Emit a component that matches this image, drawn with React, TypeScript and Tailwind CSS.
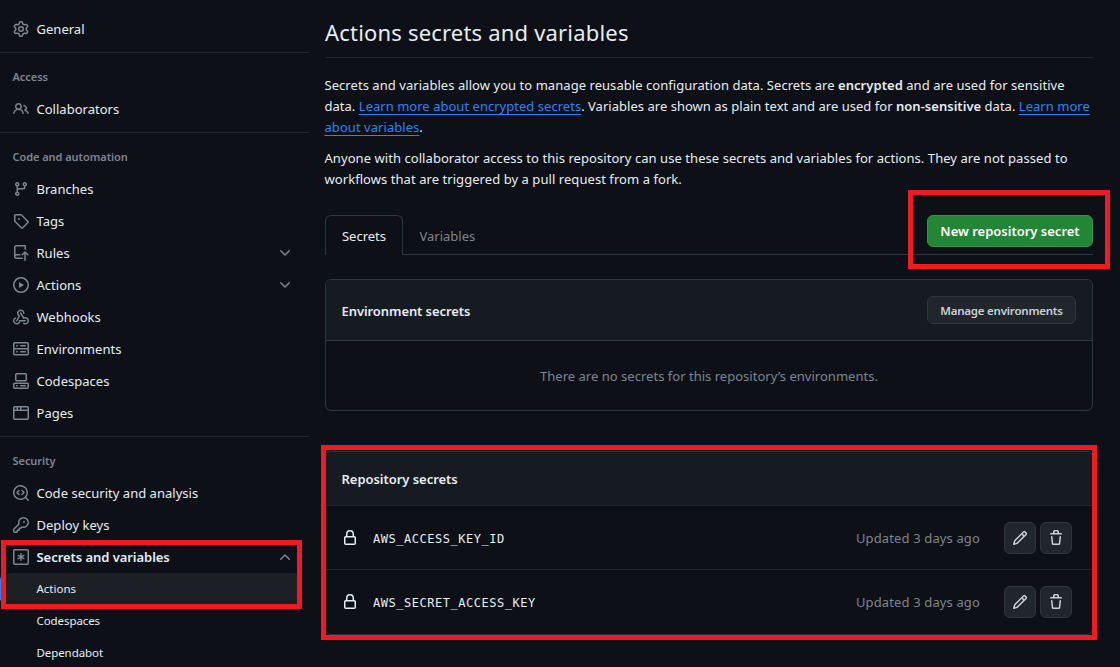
import React from "react";

const PATHS = {
  gear: "M8 0a8.2 8.2 0 0 1 .701.031C9.444.095 9.99.645 10.16 1.29l.288 1.107c.018.066.079.158.212.224.231.114.454.243.668.386.123.082.233.09.299.071l1.103-.303c.644-.176 1.392.021 1.82.63.27.385.506.792.704 1.218.315.675.111 1.422-.364 1.891l-.814.806c-.049.048-.098.147-.088.294.016.257.016.515 0 .772-.01.147.038.246.088.294l.814.806c.475.469.679 1.216.364 1.891a7.977 7.977 0 0 1-.704 1.217c-.428.61-1.176.807-1.82.63l-1.102-.302c-.067-.019-.177-.011-.3.071a5.909 5.909 0 0 1-.668.386c-.133.066-.194.158-.211.224l-.29 1.106c-.168.646-.715 1.196-1.458 1.26a8.006 8.006 0 0 1-1.402 0c-.743-.064-1.289-.614-1.458-1.26l-.289-1.106c-.018-.066-.079-.158-.212-.224a5.738 5.738 0 0 1-.668-.386c-.123-.082-.233-.09-.299-.071l-1.103.303c-.644.176-1.392-.021-1.82-.63a8.12 8.12 0 0 1-.704-1.218c-.315-.675-.111-1.422.363-1.891l.815-.806c.05-.048.098-.147.088-.294a6.214 6.214 0 0 1 0-.772c.01-.147-.038-.246-.088-.294l-.815-.806C.635 6.045.431 5.298.746 4.623a7.92 7.92 0 0 1 .704-1.217c.428-.61 1.176-.807 1.82-.63l1.102.302c.067.019.177.011.3-.071.214-.143.437-.272.668-.386.133-.066.194-.158.211-.224l.29-1.106C6.009.645 6.556.095 7.299.03 7.53.01 7.764 0 8 0Zm-.571 1.525c-.036.003-.108.036-.137.146l-.289 1.105c-.147.561-.549.967-.998 1.189-.173.086-.34.183-.5.29-.417.278-.97.423-1.529.27l-1.103-.303c-.109-.03-.175.016-.195.045-.22.312-.412.644-.573.99-.014.031-.021.11.059.19l.815.806c.411.406.562.957.53 1.456a4.709 4.709 0 0 0 0 .582c.032.499-.119 1.05-.53 1.456l-.815.806c-.081.08-.073.159-.059.19.162.346.353.677.573.989.02.03.085.076.195.046l1.102-.303c.56-.153 1.113-.008 1.53.27.161.107.328.204.501.29.447.222.85.629.997 1.189l.289 1.105c.029.109.101.143.137.146a6.6 6.6 0 0 0 1.142 0c.036-.003.108-.036.137-.146l.289-1.105c.147-.561.549-.967.998-1.189.173-.086.34-.183.5-.29.417-.278.97-.423 1.529-.27l1.103.303c.109.029.175-.016.195-.045.22-.313.411-.644.573-.99.014-.031.021-.11-.059-.19l-.815-.806c-.411-.406-.562-.957-.53-1.456a4.709 4.709 0 0 0 0-.582c-.032-.499.119-1.05.53-1.456l.815-.806c.081-.08.073-.159.059-.19a6.464 6.464 0 0 0-.573-.989c-.02-.03-.085-.076-.195-.046l-1.102.303c-.56.153-1.113.008-1.53-.27a4.44 4.44 0 0 0-.501-.29c-.447-.222-.85-.629-.997-1.189l-.289-1.105c-.029-.11-.101-.143-.137-.146a6.6 6.6 0 0 0-1.142 0ZM11 8a3 3 0 1 1-6 0 3 3 0 0 1 6 0ZM9.5 8a1.5 1.5 0 1 0-3.001.001A1.5 1.5 0 0 0 9.5 8Z",
  people: "M2 5.5a3.5 3.5 0 1 1 5.898 2.549 5.508 5.508 0 0 1 3.034 4.084.75.75 0 1 1-1.482.235 4 4 0 0 0-7.9 0 .75.75 0 0 1-1.482-.236A5.507 5.507 0 0 1 3.102 8.05 3.493 3.493 0 0 1 2 5.5ZM11 4a3.001 3.001 0 0 1 2.22 5.018 5.01 5.01 0 0 1 2.56 3.012.749.749 0 0 1-.885.954.752.752 0 0 1-.549-.514 3.507 3.507 0 0 0-2.522-2.372.75.75 0 0 1-.574-.73v-.352a.75.75 0 0 1 .416-.672A1.5 1.5 0 0 0 11 5.5.75.75 0 0 1 11 4Zm-5.5-.5a2 2 0 1 0-.001 3.999A2 2 0 0 0 5.5 3.5Z",
  branch: "M9.5 3.25a2.25 2.25 0 1 1 3 2.122V6A2.5 2.5 0 0 1 10 8.5H6a1 1 0 0 0-1 1v1.128a2.251 2.251 0 1 1-1.5 0V5.372a2.25 2.25 0 1 1 1.5 0v1.836A2.493 2.493 0 0 1 6 7h4a1 1 0 0 0 1-1v-.628A2.25 2.25 0 0 1 9.5 3.25Zm-6 0a.75.75 0 1 0 1.5 0 .75.75 0 0 0-1.5 0Zm8.25-.75a.75.75 0 1 0 0 1.5.75.75 0 0 0 0-1.5ZM4.25 12a.75.75 0 1 0 0 1.5.75.75 0 0 0 0-1.5Z",
  tag: "M1 7.775V2.75C1 1.784 1.784 1 2.75 1h5.025c.464 0 .91.184 1.238.513l6.25 6.25a1.75 1.75 0 0 1 0 2.474l-5.026 5.026a1.75 1.75 0 0 1-2.474 0l-6.25-6.25A1.752 1.752 0 0 1 1 7.775Zm1.5 0c0 .066.026.13.073.177l6.25 6.25a.25.25 0 0 0 .354 0l5.025-5.025a.25.25 0 0 0 0-.354l-6.25-6.25a.25.25 0 0 0-.177-.073H2.75a.25.25 0 0 0-.25.25ZM6 5a1 1 0 1 1 0 2 1 1 0 0 1 0-2Z",
  repoPush: "M1 2.5A2.5 2.5 0 0 1 3.5 0h8.75a.75.75 0 0 1 .75.75v3.5a.75.75 0 0 1-1.5 0V1.5h-8a1 1 0 0 0-1 1v6.708A2.493 2.493 0 0 1 3.5 9h3.25a.75.75 0 0 1 0 1.5H3.5a1 1 0 0 0 0 2h5.75a.75.75 0 0 1 0 1.5H3.5A2.5 2.5 0 0 1 1 11.5Zm13.23 7.79-1.48-1.48v6.44a.75.75 0 0 1-1.5 0V8.81l-1.48 1.48a.749.749 0 0 1-1.275-.326.749.749 0 0 1 .215-.734l2.76-2.76a.75.75 0 0 1 1.06 0l2.76 2.76a.749.749 0 0 1-.326 1.275.749.749 0 0 1-.734-.215Z",
  play: "M8 0a8 8 0 1 1 0 16A8 8 0 0 1 8 0ZM1.5 8a6.5 6.5 0 1 0 13 0 6.5 6.5 0 0 0-13 0Zm4.879-2.773 4.264 2.559a.25.25 0 0 1 0 .428l-4.264 2.559A.25.25 0 0 1 6 10.559V5.442a.25.25 0 0 1 .379-.215Z",
  webhook: "M5.5 4.25a2.25 2.25 0 0 1 4.5 0 .75.75 0 0 0 1.5 0 3.75 3.75 0 1 0-6.14 2.889l-2.272 4.258a.75.75 0 0 0 1.324.706L7 7.25a.75.75 0 0 0-.309-1.015A2.25 2.25 0 0 1 5.5 4.25Z M7.364 3.607a.75.75 0 0 1 1.03.257l2.608 4.349a3.75 3.75 0 1 1-.628 6.785.75.75 0 0 1 .752-1.299 2.25 2.25 0 1 0-.033-3.88.75.75 0 0 1-1.03-.256L7.107 4.636a.75.75 0 0 1 .257-1.03Z M2.9 8.776A.75.75 0 0 1 2.625 9.8 2.25 2.25 0 1 0 6 11.75a.75.75 0 0 1 .75-.751h5.5a.75.75 0 0 1 0 1.5H7.425a3.751 3.751 0 1 1-5.55-3.998.75.75 0 0 1 1.024.274Z",
  server: "M1.75 1h12.5c.966 0 1.75.784 1.75 1.75v4c0 .372-.116.717-.314 1 .198.283.314.628.314 1v4a1.75 1.75 0 0 1-1.75 1.75H1.75A1.75 1.75 0 0 1 0 12.75v-4c0-.358.109-.707.314-1a1.739 1.739 0 0 1-.314-1v-4C0 1.784.784 1 1.75 1ZM1.5 2.75v4c0 .138.112.25.25.25h12.5a.25.25 0 0 0 .25-.25v-4a.25.25 0 0 0-.25-.25H1.75a.25.25 0 0 0-.25.25Zm.25 5.75a.25.25 0 0 0-.25.25v4c0 .138.112.25.25.25h12.5a.25.25 0 0 0 .25-.25v-4a.25.25 0 0 0-.25-.25ZM7 4.75A.75.75 0 0 1 7.75 4h4.5a.75.75 0 0 1 0 1.5h-4.5A.75.75 0 0 1 7 4.75ZM7.75 10h4.5a.75.75 0 0 1 0 1.5h-4.5a.75.75 0 0 1 0-1.5ZM3 4.75A.75.75 0 0 1 3.75 4h.5a.75.75 0 0 1 0 1.5h-.5A.75.75 0 0 1 3 4.75ZM3.75 10h.5a.75.75 0 0 1 0 1.5h-.5a.75.75 0 0 1 0-1.5Z",
  codespaces: "M0 11.25c0-.966.784-1.75 1.75-1.75h12.5c.966 0 1.75.784 1.75 1.75v3A1.75 1.75 0 0 1 14.25 16H1.75A1.75 1.75 0 0 1 0 14.25Zm2-9.5C2 .784 2.784 0 3.75 0h8.5C13.216 0 14 .784 14 1.75v5a1.75 1.75 0 0 1-1.75 1.75h-8.5A1.75 1.75 0 0 1 2 6.75Zm1.75-.25a.25.25 0 0 0-.25.25v5c0 .138.112.25.25.25h8.5a.25.25 0 0 0 .25-.25v-5a.25.25 0 0 0-.25-.25Zm-2 9.5a.25.25 0 0 0-.25.25v3c0 .138.112.25.25.25h12.5a.25.25 0 0 0 .25-.25v-3a.25.25 0 0 0-.25-.25Z M7 12.75a.75.75 0 0 1 .75-.75h4.5a.75.75 0 0 1 0 1.5h-4.5a.75.75 0 0 1-.75-.75Zm-4 0a.75.75 0 0 1 .75-.75h.5a.75.75 0 0 1 0 1.5h-.5a.75.75 0 0 1-.75-.75Z",
  browser: "M0 2.75C0 1.784.784 1 1.75 1h12.5c.966 0 1.75.784 1.75 1.75v10.5A1.75 1.75 0 0 1 14.25 15H1.75A1.75 1.75 0 0 1 0 13.25ZM14.5 6h-13v7.25c0 .138.112.25.25.25h12.5a.25.25 0 0 0 .25-.25Zm-6-3.5v2h6V2.75a.25.25 0 0 0-.25-.25ZM5 2.5v2h2v-2Zm-3.25 0a.25.25 0 0 0-.25.25V4.5h2v-2Z",
  codescan: "M8.47 4.97a.75.75 0 0 0 0 1.06L9.94 7.5 8.47 8.97a.75.75 0 1 0 1.06 1.06l2-2a.75.75 0 0 0 0-1.06l-2-2a.75.75 0 0 0-1.06 0ZM6.53 6.03a.75.75 0 0 0-1.06-1.06l-2 2a.75.75 0 0 0 0 1.06l2 2a.75.75 0 1 0 1.06-1.06L5.06 7.5l1.47-1.47Z M12.246 13.307a7.501 7.501 0 1 1 1.06-1.06l2.474 2.473a.749.749 0 0 1-.326 1.275.749.749 0 0 1-.734-.215ZM1.5 7.5a6.002 6.002 0 0 0 3.608 5.504 6.002 6.002 0 0 0 6.486-1.117.748.748 0 0 1 .292-.293A6 6 0 1 0 1.5 7.5Z",
  key: "M10.5 0a5.499 5.499 0 1 1-1.288 10.848l-.932.932a.749.749 0 0 1-.53.22H7v.75a.749.749 0 0 1-.22.53l-.5.5a.749.749 0 0 1-.53.22H5v.75a.749.749 0 0 1-.22.53l-.5.5a.749.749 0 0 1-.53.22h-2A1.75 1.75 0 0 1 0 14.25v-2c0-.199.079-.389.22-.53l4.932-4.932A5.5 5.5 0 0 1 10.5 0Zm-4 5.5c-.001.431.069.86.205 1.269a.75.75 0 0 1-.181.768L1.5 12.56v1.69c0 .138.112.25.25.25h1.69l.06-.06v-1.19a.75.75 0 0 1 .75-.75h1.19l.06-.06v-1.19a.75.75 0 0 1 .75-.75h1.19l1.023-1.025a.75.75 0 0 1 .768-.18A4 4 0 1 0 6.5 5.5ZM11 6a1 1 0 1 1 0-2 1 1 0 0 1 0 2Z",
  asterisk: "M1.75 0h12.5C15.216 0 16 .784 16 1.75v12.5A1.75 1.75 0 0 1 14.25 16H1.75A1.75 1.75 0 0 1 0 14.25V1.75C0 .784.784 0 1.75 0ZM1.5 1.75v12.5c0 .138.112.25.25.25h12.5a.25.25 0 0 0 .25-.25V1.75a.25.25 0 0 0-.25-.25H1.75a.25.25 0 0 0-.25.25Z M8 4a.75.75 0 0 1 .75.75V6.7l1.69-.975a.75.75 0 0 1 .75 1.3L9.5 8l1.69.976a.75.75 0 0 1-.75 1.298L8.75 9.3v1.951a.75.75 0 0 1-1.5 0V9.299l-1.69.976a.75.75 0 0 1-.75-1.3L6.5 8l-1.69-.975a.75.75 0 0 1 .75-1.3l1.69.976V4.75A.75.75 0 0 1 8 4Z",
  down: "M12.78 5.22a.749.749 0 0 1 0 1.06l-4.25 4.25a.749.749 0 0 1-1.06 0L3.22 6.28a.749.749 0 1 1 1.06-1.06L8 8.939l3.72-3.719a.749.749 0 0 1 1.06 0Z",
  lock: "M4 4a4 4 0 0 1 8 0v2h.25c.966 0 1.75.784 1.75 1.75v5.5A1.75 1.75 0 0 1 12.25 15h-8.5A1.75 1.75 0 0 1 2 13.25v-5.5C2 6.784 2.784 6 3.75 6H4Zm8.25 3.5h-8.5a.25.25 0 0 0-.25.25v5.5c0 .138.112.25.25.25h8.5a.25.25 0 0 0 .25-.25v-5.5a.25.25 0 0 0-.25-.25ZM10.5 6V4a2.5 2.5 0 1 0-5 0v2Z",
  pencil: "M11.013 1.427a1.75 1.75 0 0 1 2.474 0l1.086 1.086a1.75 1.75 0 0 1 0 2.474l-8.61 8.61c-.21.21-.47.364-.756.445l-3.251.93a.75.75 0 0 1-.927-.928l.929-3.25c.081-.286.235-.547.445-.758l8.61-8.61Zm.176 4.823L9.75 4.81l-6.286 6.287a.253.253 0 0 0-.064.108l-.558 1.953 1.953-.558a.253.253 0 0 0 .108-.064Zm1.238-3.763a.25.25 0 0 0-.354 0L10.811 3.75l1.439 1.44 1.263-1.263a.25.25 0 0 0 0-.354Z",
  trash: "M11 1.75V3h2.25a.75.75 0 0 1 0 1.5H2.75a.75.75 0 0 1 0-1.5H5V1.75C5 .784 5.784 0 6.75 0h2.5C10.216 0 11 .784 11 1.75ZM4.496 6.675l.66 6.6a.25.25 0 0 0 .249.225h5.19a.25.25 0 0 0 .249-.225l.66-6.6a.75.75 0 0 1 1.492.149l-.66 6.6A1.748 1.748 0 0 1 10.595 15h-5.19a1.75 1.75 0 0 1-1.741-1.575l-.66-6.6a.75.75 0 1 1 1.492-.15ZM6.5 1.75V3h3V1.75a.25.25 0 0 0-.25-.25h-2.5a.25.25 0 0 0-.25.25Z",
};

type IconName = keyof typeof PATHS;

function Icon({ name, className = "" }: { name: IconName; className?: string }) {
  return (
    <svg viewBox="0 0 16 16" fill="currentColor" className={`size-4 shrink-0 ${className}`} aria-hidden="true">
      <path d={PATHS[name]} />
    </svg>
  );
}

function NavItem({ icon, label, chevron }: { icon: IconName; label: string; chevron?: boolean }) {
  return (
    <li className="flex h-8 items-center gap-[7.5px] pr-4 pl-[13px]">
      <Icon name={icon} className="text-[#7d8590]" />
      <span className="flex-1 pt-0.5 tracking-[0.02px]">{label}</span>
      {chevron && <Icon name="down" className="text-[#7d8590]" />}
    </li>
  );
}

function NavGroup({ title, children }: { title: string; children: React.ReactNode }) {
  return (
    <section className="mt-[7px] border-t border-[#21262d] pt-2">
      <h3 className="flex h-8 items-center pl-[12.5px] text-[11px] font-semibold tracking-[-0.05px] text-[#7d8590]">{title}</h3>
      <ul>{children}</ul>
    </section>
  );
}

function SecretRow({ name }: { name: string }) {
  return (
    <li className="flex h-16 items-center border-t border-[#21262d] pr-5 pl-4">
      <Icon name="lock" className="text-[#e6edf3]" />
      <span className="ml-[15px] flex-1 pt-0.5 font-['DejaVu_Sans_Mono',monospace] text-[12px] tracking-[0.53px]">{name}</span>
      <span className="mr-6 pt-[3px] tracking-[0.13px] text-[#7d8590]">Updated 3 days ago</span>
      <div className="flex gap-1">
        <button className="flex size-8 items-center justify-center rounded-md border border-[#30363d] bg-[#21262d] text-[#c9d1d9]">
          <Icon name="pencil" />
        </button>
        <button className="flex size-8 items-center justify-center rounded-md border border-[#30363d] bg-[#21262d] text-[#c9d1d9]">
          <Icon name="trash" />
        </button>
      </div>
    </li>
  );
}

function Link({ children }: { children: React.ReactNode }) {
  return (
    <a className="text-[#2f81f7] underline decoration-1 underline-offset-[3px] [text-decoration-skip-ink:none]">{children}</a>
  );
}

export default function App() {
  return (
    <div className="relative flex h-[667px] w-[1120px] overflow-hidden bg-[#0d1117] font-['Noto_Sans',sans-serif] text-[13px] text-[#e6edf3]">
      <nav className="w-[309px] shrink-0 pt-[13px]">
        <ul>
          <NavItem icon="gear" label="General" />
        </ul>
        <NavGroup title="Access">
          <NavItem icon="people" label="Collaborators" />
        </NavGroup>
        <NavGroup title="Code and automation">
          <NavItem icon="branch" label="Branches" />
          <NavItem icon="tag" label="Tags" />
          <NavItem icon="repoPush" label="Rules" chevron />
          <NavItem icon="play" label="Actions" chevron />
          <NavItem icon="webhook" label="Webhooks" />
          <NavItem icon="server" label="Environments" />
          <NavItem icon="codespaces" label="Codespaces" />
          <NavItem icon="browser" label="Pages" />
        </NavGroup>
        <NavGroup title="Security">
          <NavItem icon="codescan" label="Code security and analysis" />
          <NavItem icon="key" label="Deploy keys" />
          <li>
            <div className="flex h-8 items-center gap-[7.5px] pr-4 pl-[13px] font-semibold">
              <Icon name="asterisk" className="text-[#7d8590]" />
              <span className="flex-1 pt-0.5 tracking-[-0.05px]">Secrets and variables</span>
              <Icon name="down" className="rotate-180 text-[#7d8590]" />
            </div>
            <ul className="text-[11.5px]">
              <li className="flex h-8 items-center">
                <span className="-ml-[3px] h-6 w-1 shrink-0 rounded-md bg-[#2f81f7]" />
                <span className="mr-2 ml-[4px] flex h-8 flex-1 items-center rounded-md bg-[#1c2024] pl-[31.5px]">Actions</span>
              </li>
              <li className="flex h-8 items-center pl-[36.5px] tracking-[-0.08px]">Codespaces</li>
              <li className="flex h-8 items-center pl-[36.5px] tracking-[-0.08px]">Dependabot</li>
            </ul>
          </li>
        </NavGroup>
      </nav>

      <main className="ml-4 w-[768px] shrink-0">
        <h2 className="flex h-[58px] items-center border-b border-[#21262d] pt-[7px] text-[22px] tracking-[0.19px]">Actions secrets and variables</h2>
        <p className="mt-[17px] -ml-[0.5px] leading-[21px] tracking-[0.05px] whitespace-nowrap">
          Secrets and variables allow you to manage reusable configuration data. Secrets are <b className="font-semibold">encrypted</b> and are used for sensitive
          <br />
          <span className="tracking-[0.025px]">
            data. <Link>Learn more about encrypted secrets</Link>. Variables are shown as plain text and are used for{" "}
            <b className="font-semibold">non-sensitive</b> data. <Link>Learn more</Link>
          </span>
          <br />
          <Link>about variables</Link>.
        </p>
        <p className="mt-[10px] -ml-[0.5px] leading-[21px] tracking-[0.06px] whitespace-nowrap">
          Anyone with collaborator access to this repository can use these secrets and variables for actions. They are not passed to
          <br />
          workflows that are triggered by a pull request from a fork.
        </p>

        <div className="mt-[25px] flex h-10 items-start border-b border-[#30363d]">
          <div className="flex h-10 w-[78px] items-center justify-center rounded-t-md border border-b-0 border-[#30363d] bg-[#0d1117] pt-0.5">Secrets</div>
          <div className="flex h-10 flex-1 items-center pt-[3px] pl-[16.5px] text-[#7d8590]">Variables</div>
          <button className="h-8 w-[166px] rounded-md border border-[#38924a] bg-[#238636] pt-0.5 font-semibold whitespace-nowrap text-white">New repository secret</button>
        </div>

        <section className="mt-6 h-[132px] rounded-md border border-[#30363d]">
          <header className="flex h-[61px] items-center justify-between rounded-t-md border-b border-[#30363d] bg-[#161b22] pr-4 pl-[15.5px]">
            <h3 className="pt-[3px] font-semibold tracking-[-0.08px]">Environment secrets</h3>
            <button className="h-7 w-[149px] rounded-md border border-[#30363d] bg-[#21262d] pt-px text-[11.5px] font-semibold tracking-[-0.22px] whitespace-nowrap text-[#c9d1d9]">
              Manage environments
            </button>
          </header>
          <div className="flex h-[69px] items-center justify-center pt-0.5 tracking-[0.02px] text-[#7d8590]">There are no secrets for this repository’s environments.</div>
        </section>

        <section className="mt-10 rounded-md border border-[#30363d] pb-px">
          <h3 className="flex h-[53px] items-center rounded-t-md bg-[#161b22] pt-0.5 pl-[15.5px] font-semibold tracking-[-0.04px]">Repository secrets</h3>
          <ul>
            <SecretRow name="AWS_ACCESS_KEY_ID" />
            <SecretRow name="AWS_SECRET_ACCESS_KEY" />
          </ul>
        </section>
      </main>

      <div className="pointer-events-none absolute top-[540px] left-px h-[69px] w-[301px] border-5 border-[#ed1c24]" />
      <div className="pointer-events-none absolute top-[190px] left-[908px] h-[79px] w-[202px] border-5 border-[#ed1c24]" />
      <div className="pointer-events-none absolute top-[445px] left-[321px] h-[195px] w-[776px] border-5 border-[#ed1c24]" />
    </div>
  );
}
